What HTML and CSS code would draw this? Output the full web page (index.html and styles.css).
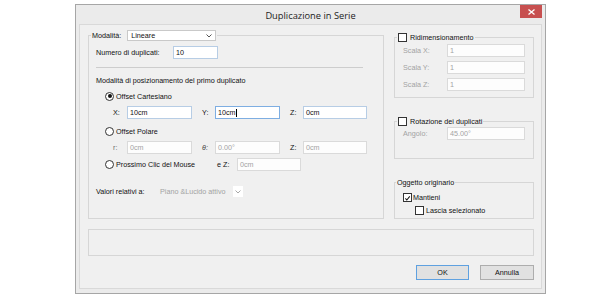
FILE: index.html
```html
<!DOCTYPE html>
<html>
<head>
<meta charset="utf-8">
<link rel="stylesheet" href="styles.css">
</head>
<body>
<div class="window">
  <div class="titlebar">
    <span></span>
    <span class="title">Duplicazione in Serie</span>
    <span class="close"><svg width="7" height="6" viewBox="0 0 7 6"><path d="M0.5 0.5 L6.5 5.5 M6.5 0.5 L0.5 5.5" stroke="#fff" stroke-width="1.3" fill="none"/></svg></span>
  </div>
  <div class="client">
    <div class="top">
      <fieldset class="grp main">
        <legend class="lg"><div class="lg-in">
          <span class="lbl">Modalità:</span>
          <span class="select mode"><span class="sel-text">Lineare</span><svg class="chev" width="6" height="4" viewBox="0 0 6 4"><path d="M0.5 0.5 L3 3 L5.5 0.5" stroke="#555" fill="none"/></svg></span>
        </div></legend>
        <div class="row r-num"><span class="lbl w-num">Numero di duplicati:</span><span class="input w45">10</span></div>
        <div class="sep"></div>
        <div class="row r-head">Modalità di posizionamento del primo duplicato</div>
        <div class="row r-radio r1"><span class="radio on"></span><span class="rlbl">Offset Cartesiano</span></div>
        <div class="row r-fields f1">
          <span class="fl fx">X:</span><span class="input w65">10cm</span>
          <span class="fl fy">Y:</span><span class="input w65 focus">10cm<i class="caret"></i></span>
          <span class="fl fz">Z:</span><span class="input w64">0cm</span>
        </div>
        <div class="row r-radio r2"><span class="radio"></span><span class="rlbl">Offset Polare</span></div>
        <div class="row r-fields f2">
          <span class="fl fx dim">r:</span><span class="input w65 dis">0cm</span>
          <span class="fl fy theta">θ:</span><span class="input w65 dis">0.00°</span>
          <span class="fl fz">Z:</span><span class="input w64 dis">0cm</span>
        </div>
        <div class="row r-radio r3">
          <span class="rgroup"><span class="radio"></span><span class="rlbl">Prossimo Clic del Mouse</span></span>
          <span class="fl ez">e Z:</span><span class="input w64 dis">0cm</span>
        </div>
        <div class="row r-val">
          <span class="lbl w-val">Valori relativi a:</span>
          <span class="select dsel"><span class="sel-text">Piano &amp;Lucido attivo</span><span class="dbtn"><svg width="6" height="4" viewBox="0 0 6 4"><path d="M0.5 0.5 L3 3 L5.5 0.5" stroke="#a8a8a8" fill="none"/></svg></span></span>
        </div>
      </fieldset>
      <div class="side">
        <fieldset class="grp g-scale">
          <legend class="lg"><div class="lg-in"><span class="chk"></span><span class="clbl">Ridimensionamento</span></div></legend>
          <div class="srow first"><span class="slbl">Scala X:</span><span class="input w78 dis">1</span></div>
          <div class="srow"><span class="slbl">Scala Y:</span><span class="input w78 dis">1</span></div>
          <div class="srow"><span class="slbl">Scala Z:</span><span class="input w78 dis">1</span></div>
        </fieldset>
        <fieldset class="grp g-rot">
          <legend class="lg"><div class="lg-in"><span class="chk"></span><span class="clbl">Rotazione dei duplicati</span></div></legend>
          <div class="srow first"><span class="slbl">Angolo:</span><span class="input w78 dis">45.00°</span></div>
        </fieldset>
        <fieldset class="grp g-obj">
          <legend class="lg lg-text"><div class="lg-in"><span class="lbl">Oggetto originario</span></div></legend>
          <div class="crow c1"><span class="chk on"><svg width="9" height="9" viewBox="0 0 9 9"><path d="M1.8 4.4 L3.6 6.4 L7.4 1.8" stroke="#111" stroke-width="1.3" fill="none"/></svg></span><span class="clbl">Mantieni</span></div>
          <div class="crow c2"><span class="chk"></span><span class="clbl">Lascia selezionato</span></div>
        </fieldset>
      </div>
    </div>
    <div class="status"></div>
    <div class="buttons">
      <span class="btn default">OK</span>
      <span class="btn">Annulla</span>
    </div>
  </div>
</div>
</body>
</html>
```

FILE: styles.css
```css
html, body {
  margin: 0;
  padding: 0;
  background: #ffffff;
}
body {
  width: 602px;
  height: 298px;
  overflow: hidden;
  font-family: "Liberation Sans", Arial, sans-serif;
  font-size: 7.2px;
  color: #111;
}
.window {
  margin: 4px 0 0 75px;
  width: 463px;
  height: 284px;
  border: 1px solid #a6a6a6;
  background: #ebebeb;
  padding: 0 3px 4px 3px;
  display: flex;
  flex-direction: column;
}
.titlebar {
  height: 19px;
  display: grid;
  grid-template-columns: 1fr auto 1fr;
  align-items: start;
  margin: 0 -3px;
}
.title {
  font-family: "Open Sans", "Liberation Sans", sans-serif;
  font-size: 9.3px;
  line-height: 19px;
  color: #1b1b1b;
  padding-top: 1px;
}
.close {
  justify-self: end;
  margin-right: 3px;
  width: 22px;
  height: 13px;
  background: #c75050;
  display: flex;
  align-items: center;
  justify-content: center;
}
.client {
  flex: 1;
  border: 1px solid #d9d9d9;
  background: #f0f0f0;
  padding: 5px 7px 0 8px;
}
.top {
  display: flex;
  gap: 10px;
  align-items: flex-start;
}
fieldset.grp {
  margin: 0;
  padding: 0;
  min-width: 0;
  border: 1px solid #d6d6d6;
}
.lg {
  padding: 0 1px;
  margin-left: 2px;
}
.lg-in {
  display: flex;
  align-items: center;
  height: 11px;
}
fieldset.main {
  width: 296px;
  box-sizing: border-box;
  padding-bottom: 21px;
}
.lbl { white-space: nowrap; }
.select {
  display: flex;
  align-items: center;
  box-sizing: border-box;
  height: 11px;
}
.mode {
  margin-left: 6px;
  width: 89px;
  background: #fff;
  border: 1px solid #c9c9c9;
  padding: 0 3px 0 3px;
  justify-content: space-between;
}
.row {
  display: flex;
  align-items: center;
  white-space: nowrap;
}
.r-num {
  margin-top: 5px;
  height: 13px;
  padding-left: 7px;
}
.w-num { width: 77px; }
.input {
  box-sizing: border-box;
  height: 13px;
  border: 1px solid #b7cde5;
  background: #fff;
  padding: 0 2px;
  display: flex;
  align-items: center;
  color: #111;
}
.input.focus { border-color: #7eaee2; }
.input.dis {
  border-color: #dadada;
  background: #fdfdfd;
  color: #a3a3a3;
}
.w45 { width: 45px; }
.w65 { width: 65px; }
.w64 { width: 64px; }
.w78 { width: 78px; }
.caret {
  display: inline-block;
  width: 1px;
  height: 8px;
  background: #000;
  margin-left: 0.5px;
}
.sep {
  margin: 8px 0 0 7px;
  width: 267px;
  height: 0;
  border-top: 1px solid #cdcdcd;
}
.r-head {
  margin-top: 7px;
  height: 10px;
  padding-left: 7px;
}
.r-radio { height: 10px; padding-left: 16px; }
.r1 { margin-top: 6px; }
.r2 { margin-top: 7px; }
.r3 { margin-top: 4px; height: 13px; }
.radio {
  width: 9px;
  height: 9px;
  box-sizing: border-box;
  border: 1px solid #333;
  border-radius: 50%;
  background: #fff;
  display: flex;
  align-items: center;
  justify-content: center;
  flex: none;
}
.radio.on::after {
  content: "";
  width: 4px;
  height: 4px;
  border-radius: 50%;
  background: #111;
}
.rlbl { margin-left: 2px; }
.rgroup {
  display: flex;
  align-items: center;
  width: 112px;
}
.r-fields {
  margin-top: 5px;
  height: 13px;
  padding-left: 24px;
}
.fl { flex: none; }
.fx { width: 14px; }
.fy { width: 13px; margin-left: 10px; }
.fz { width: 13px; margin-left: 10px; }
.ez { width: 20px; }
.dim { color: #6e6e6e; }
.theta { font-style: italic; color: #444; }
.r-val {
  margin-top: 15px;
  height: 11px;
  padding-left: 7px;
}
.w-val { width: 63px; }
.dsel {
  width: 84px;
  color: #a3a3a3;
  justify-content: space-between;
  padding-left: 1px;
}
.dbtn {
  width: 10px;
  height: 11px;
  background: #fff;
  display: flex;
  align-items: center;
  justify-content: center;
}
.side {
  width: 140px;
  margin-top: 2px;
  display: flex;
  flex-direction: column;
}
.side .lg-in { height: 10px; }
.chk {
  width: 9px;
  height: 9px;
  box-sizing: border-box;
  border: 1px solid #333;
  background: #fff;
  flex: none;
  display: flex;
}
.clbl { margin-left: 3px; white-space: nowrap; }
fieldset.g-scale { padding-bottom: 6px; }
fieldset.g-rot { padding-bottom: 18px; margin-top: 18px; }
fieldset.g-obj { padding-bottom: 3px; margin-top: 18px; }
.lg-text { margin-left: 1px; }
.srow {
  display: flex;
  align-items: center;
  height: 13px;
  margin-top: 4px;
  padding-left: 8px;
}
.srow.first { margin-top: 2px; }
.g-rot .srow.first { margin-top: 1px; }
.slbl { width: 44px; color: #a3a3a3; }
.crow {
  display: flex;
  align-items: center;
  height: 10px;
  padding-left: 8px;
}
.c1 { margin-top: 5px; }
.c2 { margin-top: 3px; padding-left: 20px; }
.c1 .clbl { margin-left: 1px; }
.c2 .clbl { margin-left: 2px; }
.status {
  margin-top: 10px;
  height: 27px;
  box-sizing: border-box;
  border: 1px solid #d6d6d6;
}
.buttons {
  margin-top: 9px;
  display: flex;
  justify-content: flex-end;
  gap: 11px;
}
.btn {
  box-sizing: border-box;
  width: 53px;
  height: 15px;
  border: 1px solid #adadad;
  background: #e1e1e1;
  display: flex;
  align-items: center;
  justify-content: center;
  color: #111;
}
.btn.default { border-color: #5fa1e0; }
.btn + .btn { width: 54px; }
```
